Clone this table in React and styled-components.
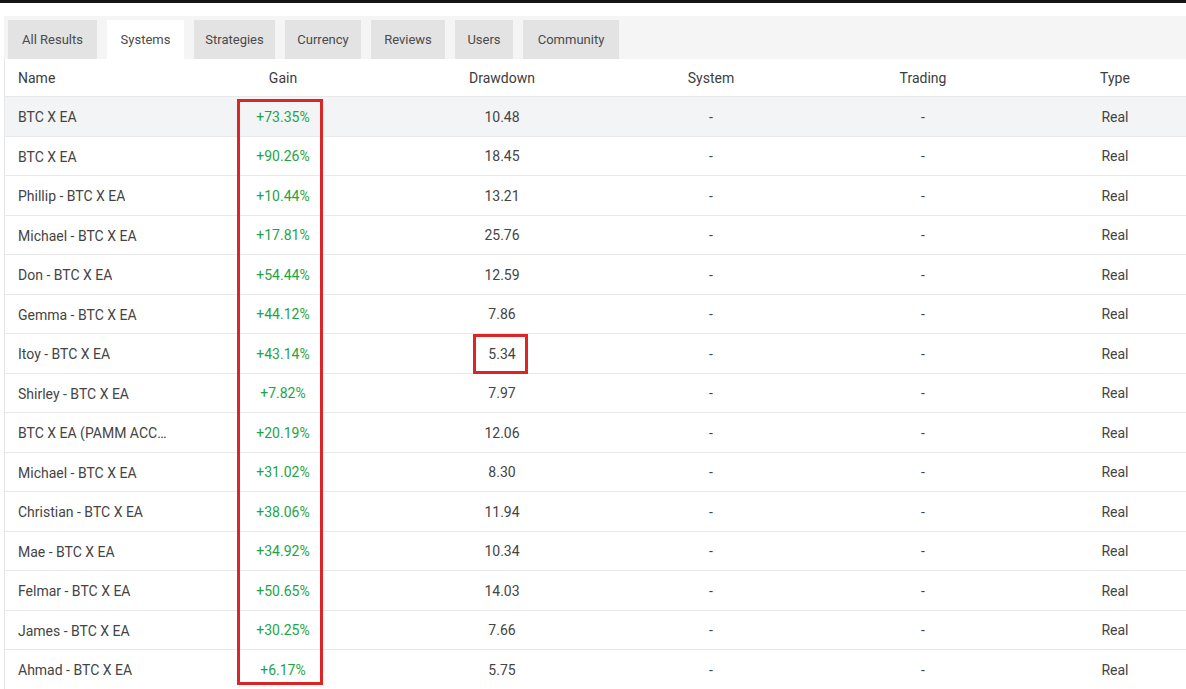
import React from "react";
import styled, { createGlobalStyle } from "styled-components";

const Global = createGlobalStyle`
  html, body { margin: 0; padding: 0; background: #ffffff; }
  body { font-family: Roboto, "Noto Sans", "Liberation Sans", sans-serif; color: #333; overflow: hidden; }
`;

const TopStrip = styled.div`
  height: 3px;
  background: #161616;
`;

const Page = styled.div`
  padding: 13px 0 0 4px;
`;

const TabBar = styled.div`
  display: flex;
  align-items: flex-end;
  gap: 10px;
  height: 43px;
  padding-left: 4px;
  background: #f5f5f5;
`;

const Tab = styled.div`
  width: ${(p) => p.$w}px;
  height: 39px;
  box-sizing: border-box;
  display: flex;
  align-items: center;
  justify-content: center;
  font-size: 13px;
  color: #4a4a4a;
  background: ${(p) => (p.$active ? "#ffffff" : "#e3e3e3")};
`;

const TableWrap = styled.div`
  position: relative;
  border-left: 1px solid #e6e6e6;
`;

const cols = "184px 188px 250px 168px 256px 128px 1fr";

const HeaderRow = styled.div`
  display: grid;
  grid-template-columns: ${cols};
  height: 38px;
  box-sizing: border-box;
  padding-top: 1px;
  align-items: center;
  background: #fff;
  border-bottom: 1px solid #e8e8e8;
  font-size: 14px;
  color: #3d3d3d;
`;

const Row = styled.div`
  display: grid;
  grid-template-columns: ${cols};
  height: 39.5px;
  box-sizing: border-box;
  padding-top: 1px;
  align-items: center;
  background: ${(p) => (p.$hover ? "#f3f4f6" : "#fff")};
  border-bottom: 1px solid #e8e8e8;
  font-size: 14px;
  color: #444;
`;

const Cell = styled.div`
  text-align: ${(p) => (p.$left ? "left" : "center")};
  padding-left: ${(p) => (p.$left ? "13px" : "0")};
  white-space: nowrap;
  overflow: hidden;
`;

const NameText = styled.span`
  display: inline-block;
  max-width: 153px;
  overflow: hidden;
  text-overflow: ellipsis;
  white-space: nowrap;
  vertical-align: middle;
`;

const Gain = styled.span`
  color: #1ea446;
`;

const Mark = styled.div`
  position: absolute;
  box-sizing: border-box;
  border: 3px solid #dc2626;
  pointer-events: none;
`;

const tabs = [
  ["All Results", 89],
  ["Systems", 77],
  ["Strategies", 81],
  ["Currency", 76],
  ["Reviews", 74],
  ["Users", 58],
  ["Community", 96],
];

const rows = [
  ["BTC X EA", "+73.35%", "10.48"],
  ["BTC X EA", "+90.26%", "18.45"],
  ["Phillip - BTC X EA", "+10.44%", "13.21"],
  ["Michael - BTC X EA", "+17.81%", "25.76"],
  ["Don - BTC X EA", "+54.44%", "12.59"],
  ["Gemma - BTC X EA", "+44.12%", "7.86"],
  ["Itoy - BTC X EA", "+43.14%", "5.34"],
  ["Shirley - BTC X EA", "+7.82%", "7.97"],
  ["BTC X EA (PAMM ACCOUNT)", "+20.19%", "12.06"],
  ["Michael - BTC X EA", "+31.02%", "8.30"],
  ["Christian - BTC X EA", "+38.06%", "11.94"],
  ["Mae - BTC X EA", "+34.92%", "10.34"],
  ["Felmar - BTC X EA", "+50.65%", "14.03"],
  ["James - BTC X EA", "+30.25%", "7.66"],
  ["Ahmad - BTC X EA", "+6.17%", "5.75"],
];

export default function App() {
  return (
    <>
      <Global />
      <TopStrip />
      <Page>
        <TabBar>
          {tabs.map(([t, w]) => (
            <Tab key={t} $w={w} $active={t === "Systems"}>
              {t}
            </Tab>
          ))}
        </TabBar>
        <TableWrap>
          <HeaderRow>
            <Cell $left>Name</Cell>
            <Cell>Gain</Cell>
            <Cell>Drawdown</Cell>
            <Cell>System</Cell>
            <Cell>Trading</Cell>
            <Cell>Type</Cell>
            <Cell />
          </HeaderRow>
          {rows.map(([n, g, d], i) => (
            <Row key={i} $hover={i === 0}>
              <Cell $left>
                <NameText>{n}</NameText>
              </Cell>
              <Cell>
                <Gain>{g}</Gain>
              </Cell>
              <Cell>{d}</Cell>
              <Cell>-</Cell>
              <Cell>-</Cell>
              <Cell>Real</Cell>
              <Cell />
            </Row>
          ))}
          <Mark style={{ left: 232, top: 40, width: 86, height: 586 }} />
          <Mark style={{ left: 468, top: 275, width: 55, height: 40 }} />
        </TableWrap>
      </Page>
    </>
  );
}
